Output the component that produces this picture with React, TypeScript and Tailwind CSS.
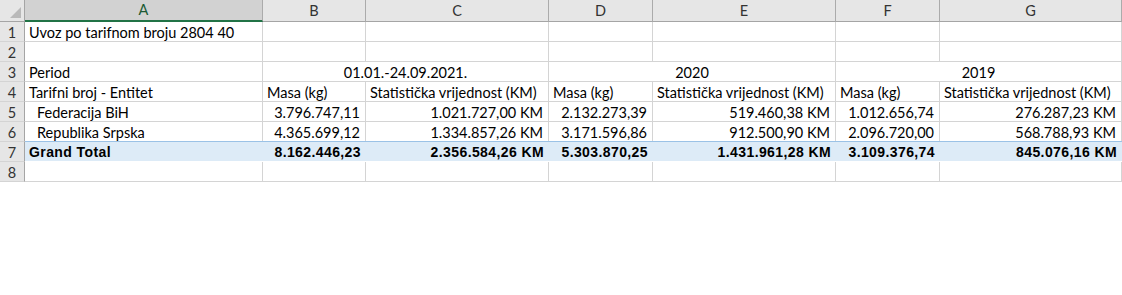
import React from "react";

const W = [238, 103, 183, 104, 183, 104, 182];
const cols = ["A", "B", "C", "D", "E", "F", "G"];

type Cell = { t?: string; span?: number; align?: "l" | "r" | "c"; indent?: boolean };

const rows: Cell[][] = [
  [{ t: "Uvoz po tarifnom broju 2804 40" }, {}, {}, {}, {}, {}, {}],
  [{}, {}, {}, {}, {}, {}, {}],
  [
    { t: "Period" },
    { t: "01.01.-24.09.2021.", span: 2, align: "c" },
    { t: "2020", span: 2, align: "c" },
    { t: "2019", span: 2, align: "c" },
  ],
  [
    { t: "Tarifni broj - Entitet" },
    { t: "Masa (kg)" },
    { t: "Statistička vrijednost (KM)" },
    { t: "Masa (kg)" },
    { t: "Statistička vrijednost (KM)" },
    { t: "Masa (kg)" },
    { t: "Statistička vrijednost (KM)" },
  ],
  [
    { t: "Federacija BiH", indent: true },
    { t: "3.796.747,11", align: "r" },
    { t: "1.021.727,00 KM", align: "r" },
    { t: "2.132.273,39", align: "r" },
    { t: "519.460,38 KM", align: "r" },
    { t: "1.012.656,74", align: "r" },
    { t: "276.287,23 KM", align: "r" },
  ],
  [
    { t: "Republika Srpska", indent: true },
    { t: "4.365.699,12", align: "r" },
    { t: "1.334.857,26 KM", align: "r" },
    { t: "3.171.596,86", align: "r" },
    { t: "912.500,90 KM", align: "r" },
    { t: "2.096.720,00", align: "r" },
    { t: "568.788,93 KM", align: "r" },
  ],
];

const total = [
  { t: "Grand Total" },
  { t: "8.162.446,23" },
  { t: "2.356.584,26 KM" },
  { t: "5.303.870,25" },
  { t: "1.431.961,28 KM" },
  { t: "3.109.376,74" },
  { t: "845.076,16 KM" },
];

const font = { fontFamily: "Lato, 'Open Sans', sans-serif" };

function RowHead({ n }: { n: number }) {
  return (
    <div className="w-[25px] h-[20px] shrink-0 bg-[#e6e6e6] border-b border-r border-b-[#d4d4d4] border-r-[#a5a5a5] flex items-center justify-center pt-[2px] text-[14.5px] text-[#333]">
      {n}
    </div>
  );
}

export default function App() {
  return (
    <div className="w-[1122px] h-[295px] bg-white overflow-hidden text-black" style={font}>
      <div className="flex h-[22px]">
        <div className="w-[25px] h-[22px] shrink-0 bg-[#e6e6e6] border-b border-r border-[#a5a5a5] relative">
          <svg className="absolute right-[3px] bottom-[3px]" width="11" height="11" viewBox="0 0 11 11">
            <polygon points="11,0 11,11 0,11" fill="#b9b9b9" />
          </svg>
        </div>
        {cols.map((c, i) => (
          <div
            key={c}
            style={{ width: W[i] }}
            className={
              i === 0
                ? "shrink-0 h-[22px] bg-[#d2d2d2] border-r border-r-[#ababab] border-b-2 border-b-[#217346] flex items-center justify-center text-[14.5px] text-[#1c5a34]"
                : "shrink-0 h-[22px] bg-[#e6e6e6] border-r border-r-[#ababab] border-b border-b-[#a5a5a5] flex items-center justify-center text-[14.5px] text-[#333]"
            }
          >
            {c}
          </div>
        ))}
      </div>
      {rows.map((r, ri) => {
        let idx = 0;
        return (
          <div key={ri} className="flex h-[20px]">
            <RowHead n={ri + 1} />
            {r.map((cell, ci) => {
              const span = cell.span ?? 1;
              let w = 0;
              for (let k = 0; k < span; k++) w += W[idx + k];
              idx += span;
              const align =
                cell.align === "r" ? "justify-end pr-[5px]" : cell.align === "c" ? "justify-center" : cell.indent ? "justify-start pl-[12px]" : "justify-start pl-[4px]";
              return (
                <div
                  key={ci}
                  style={{ width: w }}
                  className={`shrink-0 h-[20px] border-r border-b border-[#d4d4d4] flex items-center pt-[2px] whitespace-nowrap overflow-visible text-[14.5px] ${align}`}
                >
                  {cell.t}
                </div>
              );
            })}
          </div>
        );
      })}
      <div className="flex h-[20px]">
        <RowHead n={7} />
        <div className="flex bg-[#ddebf7] border-t border-t-[#9bc2e6] h-[20px] -mt-px">
          {total.map((cell, ci) => (
            <div
              key={ci}
              style={{ width: W[ci], fontFamily: "'Liberation Sans', Arial, sans-serif" }}
              className={`shrink-0 h-[19px] flex items-center pt-[2px] whitespace-nowrap font-bold text-[14px] tracking-[0.4px] ${ci === 0 ? "justify-start pl-[4px]" : "justify-end pr-[5px]"}`}
            >
              {cell.t}
            </div>
          ))}
        </div>
      </div>
      <div className="flex h-[20px]">
        <RowHead n={8} />
        {W.map((w, i) => (
          <div key={i} style={{ width: w }} className="shrink-0 h-[20px] border-r border-b border-[#d4d4d4]" />
        ))}
      </div>
    </div>
  );
}
